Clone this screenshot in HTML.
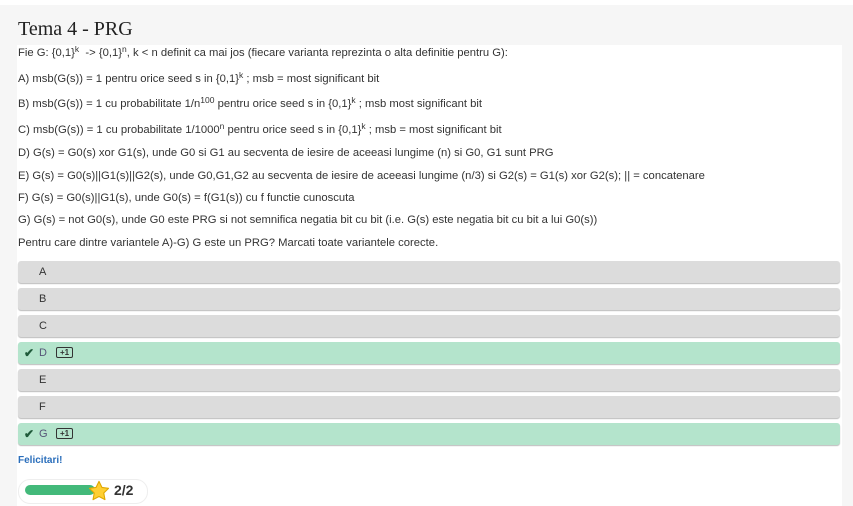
<!DOCTYPE html>
<html><head><meta charset="utf-8"><style>
html,body{margin:0;padding:0;width:853px;height:506px;overflow:hidden;background:#fff;font-family:"Liberation Sans",Arial,sans-serif;color:#333}
.outer{position:absolute;left:0;top:5px;width:853px;height:501px;background:#f6f6f6}
.inner{position:absolute;left:17px;top:45px;width:825px;height:461px;background:#fff}
.t{position:absolute;left:18px;font-size:11.25px;white-space:nowrap}
sup{font-size:8.5px;vertical-align:4px;line-height:0}
h1{position:absolute;left:18px;top:18px;margin:0;font-family:"Liberation Serif",serif;font-weight:normal;font-size:20px;color:#222}
.opt{position:absolute;left:18px;width:822px;height:22px;background:#dcdcdc;border-radius:3px;box-shadow:0 1px 1px #bbb;font-size:11px;line-height:22px}
.opt span.l{position:absolute;left:21px}
.ok{background:#b4e4cc}
.ok .ck{position:absolute;left:6px;top:0;color:#1f5a3a;font-size:12px;font-weight:bold}
.ok span.l{color:#557}
.pl{position:absolute;left:38px;top:5px;width:15px;border:1px solid #333;border-radius:2px;font-size:8px;line-height:9px;text-align:center;font-weight:bold;color:#333}
</style></head><body>
<div class="outer"></div>
<div class="inner"></div>
<h1>Tema 4 - PRG</h1>
<div class="t" style="top:47px">Fie G: {0,1}<sup>k</sup> &nbsp;-&gt; {0,1}<sup>n</sup>, k &lt; n definit ca mai jos (fiecare varianta reprezinta o alta definitie pentru G):</div>
<div class="t" style="top:73px">A) msb(G(s)) = 1 pentru orice seed s in {0,1}<sup>k</sup> ; msb = most significant bit</div>
<div class="t" style="top:98px">B) msb(G(s)) = 1 cu probabilitate 1/n<sup>100</sup> pentru orice seed s in {0,1}<sup>k</sup> ; msb most significant bit</div>
<div class="t" style="top:124px">C) msb(G(s)) = 1 cu probabilitate 1/1000<sup>n</sup> pentru orice seed s in {0,1}<sup>k</sup> ; msb = most significant bit</div>
<div class="t" style="top:147px">D) G(s) = G0(s) xor G1(s), unde G0 si G1 au secventa de iesire de aceeasi lungime (n) si G0, G1 sunt PRG</div>
<div class="t" style="top:170px">E) G(s) = G0(s)||G1(s)||G2(s), unde G0,G1,G2 au secventa de iesire de aceeasi lungime (n/3) si G2(s) = G1(s) xor G2(s); || = concatenare</div>
<div class="t" style="top:192px">F) G(s) = G0(s)||G1(s), unde G0(s) = f(G1(s)) cu f functie cunoscuta</div>
<div class="t" style="top:214px">G) G(s) = not G0(s), unde G0 este PRG si not semnifica negatia bit cu bit (i.e. G(s) este negatia bit cu bit a lui G0(s))</div>
<div class="t" style="top:237px">Pentru care dintre variantele A)-G) G este un PRG? Marcati toate variantele corecte.</div>
<div class="opt" style="top:261px"><span class="l">A</span></div>
<div class="opt" style="top:288px"><span class="l">B</span></div>
<div class="opt" style="top:315px"><span class="l">C</span></div>
<div class="opt ok" style="top:342px"><span class="ck">✔</span><span class="l">D</span><span class="pl">+1</span></div>
<div class="opt" style="top:369px"><span class="l">E</span></div>
<div class="opt" style="top:396px"><span class="l">F</span></div>
<div class="opt ok" style="top:423px"><span class="ck">✔</span><span class="l">G</span><span class="pl">+1</span></div>
<div style="position:absolute;left:18px;top:455px;font-size:10px;font-weight:bold;color:#2a6ebb">Felicitari!</div>
<div style="position:absolute;left:18px;top:479px;width:128px;height:23px;border:1px solid #eee;border-radius:12px;background:#fff"></div>
<div style="position:absolute;left:25px;top:485px;width:70px;height:10px;border-radius:5px;background:#43b97a"></div>
<svg style="position:absolute;left:88px;top:480px" width="22" height="22" viewBox="0 0 24 24"><path d="M12 1.5l3.2 6.6 7.2 1-5.2 5.1 1.3 7.2L12 18l-6.5 3.4 1.3-7.2L1.6 9.1l7.2-1z" fill="#ffcf33" stroke="#e0a800" stroke-width="1.2" stroke-linejoin="round"/></svg>
<div style="position:absolute;left:114px;top:482px;font-size:14px;font-weight:bold;color:#333">2/2</div>
</body></html>
